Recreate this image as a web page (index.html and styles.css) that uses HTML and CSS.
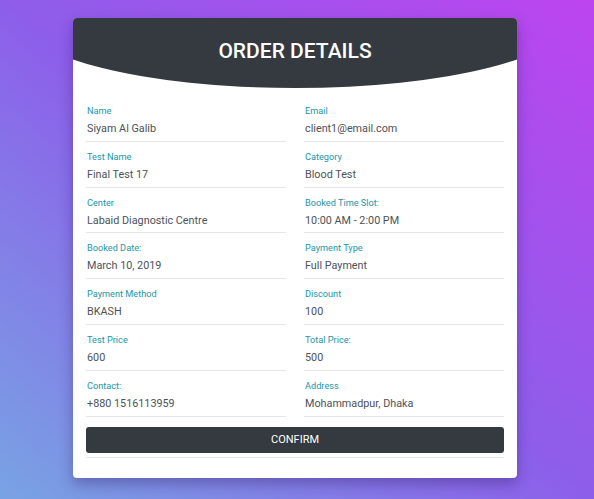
FILE: index.html
```html
<!DOCTYPE html>
<html>
<head>
<meta charset="utf-8">
<link rel="stylesheet" href="styles.css">
</head>
<body>
<div class="card">
  <div class="header"><h1 class="title">ORDER DETAILS</h1></div>
  <div class="content">
    <div class="grid">
      <div class="field"><div class="label">Name</div><div class="value">Siyam Al Galib</div></div>
      <div class="field"><div class="label">Email</div><div class="value">client1@email.com</div></div>
      <div class="field"><div class="label">Test Name</div><div class="value">Final Test 17</div></div>
      <div class="field"><div class="label">Category</div><div class="value">Blood Test</div></div>
      <div class="field"><div class="label">Center</div><div class="value">Labaid Diagnostic Centre</div></div>
      <div class="field"><div class="label">Booked Time Slot:</div><div class="value">10:00 AM - 2:00 PM</div></div>
      <div class="field"><div class="label">Booked Date:</div><div class="value">March 10, 2019</div></div>
      <div class="field"><div class="label">Payment Type</div><div class="value">Full Payment</div></div>
      <div class="field"><div class="label">Payment Method</div><div class="value">BKASH</div></div>
      <div class="field"><div class="label">Discount</div><div class="value">100</div></div>
      <div class="field"><div class="label">Test Price</div><div class="value">600</div></div>
      <div class="field"><div class="label">Total Price:</div><div class="value">500</div></div>
      <div class="field"><div class="label">Contact:</div><div class="value">+880 1516113959</div></div>
      <div class="field"><div class="label">Address</div><div class="value">Mohammadpur, Dhaka</div></div>
    </div>
    <button class="confirm">CONFIRM</button>
    <div class="rule"></div>
  </div>
</div>
</body>
</html>
```
FILE: styles.css
```css
html, body {
  margin: 0;
  padding: 0;
  height: 100%;
}
body {
  font-family: Roboto, "Liberation Sans", sans-serif;
  background: linear-gradient(to top right, #78a3e3 0%, #8d5eea 50%, #bd44ef 100%);
  padding-top: 18px;
  box-sizing: border-box;
  overflow: hidden;
}
.card {
  width: 444px;
  margin-left: 73px;
  background: #fff;
  border-radius: 4px;
  overflow: hidden;
  box-shadow: 0 6px 14px rgba(40, 20, 90, 0.35);
}
.header {
  height: 70px;
  background: #343a40;
  clip-path: ellipse(62% 100% at 50% 0%);
  display: flex;
  justify-content: center;
}
.title {
  margin: 0;
  padding-top: 20px;
  color: #fff;
  font-size: 21px;
  line-height: 27px;
  font-weight: 500;
  letter-spacing: 0;
}
.content {
  padding: 8px 13px 20px 13px;
}
.grid {
  display: grid;
  grid-template-columns: 1fr 1fr;
  column-gap: 18px;
}
.field {
  padding: 9px 0 4px 1px;
  border-bottom: 1px solid #e4e6e8;
}
.label {
  font-size: 9.2px;
  line-height: 12px;
  color: #1d95a8;
}
.value {
  margin-top: 4px;
  font-size: 10.8px;
  line-height: 15.8px;
  color: #4d5258;
}
.confirm {
  display: block;
  width: 100%;
  height: 26px;
  margin-top: 10px;
  border: none;
  border-radius: 3px;
  background: #343a40;
  color: #fff;
  font-family: Roboto, "Liberation Sans", sans-serif;
  font-size: 11px;
  padding: 0;
}
.rule {
  margin-top: 4px;
  border-top: 1px solid #e4e6e8;
}
```
